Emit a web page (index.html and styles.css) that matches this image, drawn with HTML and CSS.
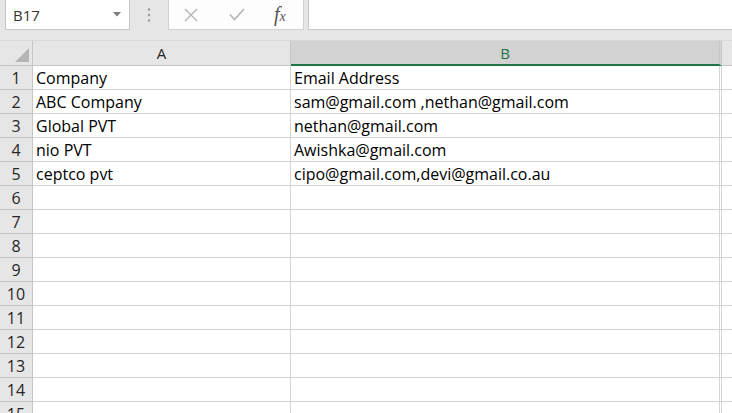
FILE: index.html
```html
<!DOCTYPE html>
<html lang="en">
<head>
    <meta charset="UTF-8">
    <title>Book1 - Excel</title>
    <link rel="stylesheet" href="styles.css">
</head>
<body>
    <div class="formula-bar">
        <div class="name-box">
            <span>B17</span>
            <svg class="drop" width="8" height="5" viewBox="0 0 8 5"><path d="M0 0h8L4 4.5z" fill="#7a7a7a"/></svg>
        </div>
        <div class="grip">
            <svg width="4" height="16" viewBox="0 0 4 16"><circle cx="2" cy="2.5" r="1.2" fill="#9a9a9a"/><circle cx="2" cy="8" r="1.2" fill="#9a9a9a"/><circle cx="2" cy="13.5" r="1.2" fill="#9a9a9a"/></svg>
        </div>
        <div class="fx-buttons">
            <svg class="btn" width="14" height="14" viewBox="0 0 14 14"><path d="M1 1L13 13M13 1L1 13" stroke="#b4b4b4" stroke-width="1.4" fill="none"/></svg>
            <svg class="btn" width="16" height="13" viewBox="0 0 16 13"><path d="M1 6.5L5.5 11.5L15 1" stroke="#b4b4b4" stroke-width="1.6" fill="none"/></svg>
            <span class="fx">f<span class="x">x</span></span>
        </div>
        <div class="formula-input"></div>
    </div>

    <div class="sheet">
        <div class="corner"><span class="tri"></span></div>
        <div class="col-head">A</div>
        <div class="col-head active">B</div>
        <div class="col-head blank"></div>

        <div class="row-head">1</div><div class="cell">Company</div><div class="cell">Email Address</div><div class="cell end"></div>
        <div class="row-head">2</div><div class="cell">ABC Company</div><div class="cell">sam@gmail.com ,nethan@gmail.com</div><div class="cell end"></div>
        <div class="row-head">3</div><div class="cell">Global PVT</div><div class="cell">nethan@gmail.com</div><div class="cell end"></div>
        <div class="row-head">4</div><div class="cell">nio PVT</div><div class="cell">Awishka@gmail.com</div><div class="cell end"></div>
        <div class="row-head">5</div><div class="cell">ceptco pvt</div><div class="cell">cipo@gmail.com,devi@gmail.co.au</div><div class="cell end"></div>
        <div class="row-head">6</div><div class="cell"></div><div class="cell"></div><div class="cell end"></div>
        <div class="row-head">7</div><div class="cell"></div><div class="cell"></div><div class="cell end"></div>
        <div class="row-head">8</div><div class="cell"></div><div class="cell"></div><div class="cell end"></div>
        <div class="row-head">9</div><div class="cell"></div><div class="cell"></div><div class="cell end"></div>
        <div class="row-head">10</div><div class="cell"></div><div class="cell"></div><div class="cell end"></div>
        <div class="row-head">11</div><div class="cell"></div><div class="cell"></div><div class="cell end"></div>
        <div class="row-head">12</div><div class="cell"></div><div class="cell"></div><div class="cell end"></div>
        <div class="row-head">13</div><div class="cell"></div><div class="cell"></div><div class="cell end"></div>
        <div class="row-head">14</div><div class="cell"></div><div class="cell"></div><div class="cell end"></div>
        <div class="row-head">15</div><div class="cell"></div><div class="cell"></div><div class="cell end"></div>
    </div>
</body>
</html>
```

FILE: styles.css
```css
body {
    margin: 0;
    background-color: #e6e6e6;
    font-family: "Open Sans", "Noto Sans", sans-serif;
    overflow: hidden;
    width: 732px;
    height: 413px;
}
/* Formula bar */
.formula-bar {
    display: flex;
    align-items: stretch;
    height: 30px;
    padding-bottom: 10px;
    border-bottom: 1px solid #d8d8d8;
}
.name-box {
    width: 125px;
    margin-left: 5px;
    background-color: #ffffff;
    border: 1px solid #c6c6c6;
    border-top: none;
    display: flex;
    align-items: center;
    justify-content: space-between;
    padding: 0 8px 0 7px;
    box-sizing: border-box;
    font-size: 15px;
    color: #333;
}
.grip {
    width: 38px;
    display: flex;
    align-items: center;
    justify-content: center;
}
.fx-buttons {
    width: 136px;
    background-color: #fdfdfd;
    border: 1px solid #d0d0d0;
    border-top: none;
    box-sizing: border-box;
    display: flex;
    align-items: center;
    padding-left: 15px;
    gap: 31px;
}
.fx {
    font-family: "Liberation Serif", serif;
    font-style: italic;
    font-size: 20px;
    color: #555;
    margin-left: -2px;
}
.fx .x {
    font-size: 14px;
}
.formula-input {
    flex: 1;
    margin-left: 4px;
    background-color: #ffffff;
    border: 1px solid #c6c6c6;
    border-top: none;
    border-right: none;
}
/* Sheet grid */
.sheet {
    display: grid;
    grid-template-columns: 33px 258px 431px 1fr;
    grid-auto-rows: 24px;
    grid-template-rows: 25px;
    background-color: #ffffff;
}
.corner {
    background-color: #e6e6e6;
    border-right: 1px solid #c6c6c6;
    border-bottom: 1px solid #c6c6c6;
    position: relative;
}
.tri {
    position: absolute;
    right: 3px;
    bottom: 3px;
    width: 0;
    height: 0;
    border-left: 14px solid transparent;
    border-bottom: 14px solid #b5b5b5;
}
.col-head {
    background-color: #e6e6e6;
    border-right: 1px solid #c6c6c6;
    border-bottom: 1px solid #c6c6c6;
    font-size: 15px;
    color: #262626;
    display: flex;
    align-items: center;
    justify-content: center;
}
.col-head.active {
    background-color: #d2d2d2;
    color: #217346;
    border-bottom: 2px solid #217346;
    border-right: 3px double #c6c6c6;
}
.col-head.blank {
    border-right: none;
}
.row-head {
    background-color: #e6e6e6;
    border-right: 1px solid #c6c6c6;
    border-bottom: 1px solid #c6c6c6;
    font-size: 16px;
    color: #262626;
    display: flex;
    align-items: flex-end;
    justify-content: center;
    line-height: 22px;
}
.cell {
    border-right: 1px solid #d4d4d4;
    border-bottom: 1px solid #d4d4d4;
    font-size: 16px;
    color: #000;
    padding-left: 3px;
    line-height: 22px;
    white-space: nowrap;
    display: flex;
    align-items: flex-end;
}
.sheet > .cell:nth-child(4n+3) {
    border-right: 3px double #d4d4d4;
}
.cell.end {
    border-right: none;
}
```
